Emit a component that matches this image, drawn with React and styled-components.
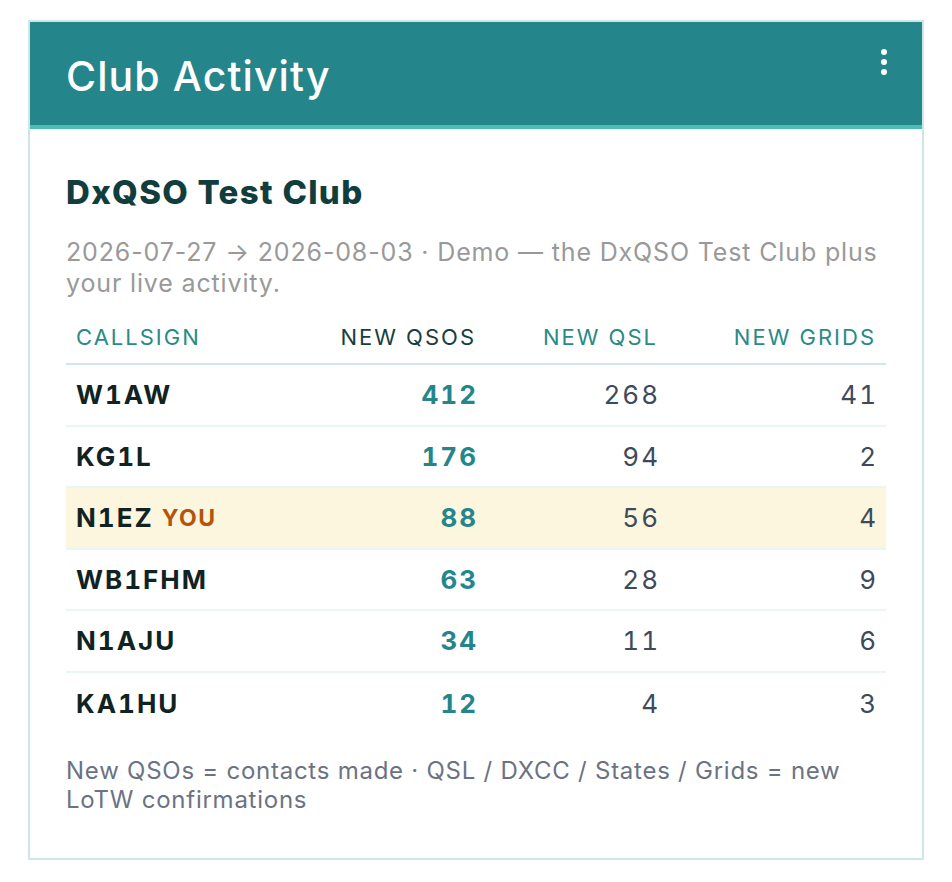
import React from "react";
import styled, { createGlobalStyle } from "styled-components";

const GlobalStyle = createGlobalStyle`
  html, body { margin: 0; padding: 0; background: #ffffff; }
  body { font-family: Inter, "Noto Sans", sans-serif; -webkit-font-smoothing: antialiased; }
`;

const Page = styled.div`
  padding: 20px 28px 24px 28px;
`;

const Card = styled.section`
  border: 2px solid #cfe6e6;
  background: #ffffff;
`;

const Header = styled.header`
  display: flex;
  align-items: flex-start;
  justify-content: space-between;
  background: #24868a;
  border-bottom: 4px solid #4fbcb5;
  padding: 27px 35px 0 36px;
  height: 107px;
  box-sizing: border-box;
`;

const HeaderTitle = styled.h1`
  margin: 0;
  padding-top: 3px;
  font-family: Inter, sans-serif;
  font-weight: 500;
  font-size: 41px;
  line-height: 48px;
  color: #ffffff;
  letter-spacing: 1.1px;
`;

const MenuButton = styled.button`
  display: flex;
  flex-direction: column;
  align-items: center;
  gap: 4px;
  padding: 0;
  background: none;
  border: none;
  cursor: pointer;
`;

const Dot = styled.span`
  width: 6px;
  height: 6px;
  border-radius: 50%;
  background: #ffffff;
`;

const Body = styled.div`
  padding: 44px 36px 44px 36px;
`;

const ClubName = styled.h2`
  margin: 0;
  font-size: 33px;
  line-height: 38px;
  font-weight: 800;
  letter-spacing: 1.3px;
  color: #123d3d;
`;

const Subtitle = styled.p`
  margin: 26px 0 0 0;
  font-size: 25px;
  line-height: 31px;
  letter-spacing: 0.85px;
  color: #999999;
`;

const Grid = styled.div`
  margin-top: 16px;
  display: grid;
  grid-template-columns: 234px 186px 182px 218px;
`;

const HeadCell = styled.div`
  padding: 10px 10px 14px 10px;
  font-size: 22px;
  line-height: 24px;
  letter-spacing: 2px;
  text-transform: uppercase;
  text-align: ${(p) => (p.$right ? "right" : "left")};
  color: ${(p) => (p.$active ? "#173f40" : "#2a8a86")};
  border-bottom: 2px solid #d2e8e8;
  font-weight: 400;
`;

const Cell = styled.div`
  height: 61.5px;
  box-sizing: border-box;
  display: flex;
  align-items: center;
  justify-content: ${(p) => (p.$right ? "flex-end" : "flex-start")};
  gap: 8px;
  padding: 0 ${(p) => (p.$right ? "8px" : "10px")} 0 10px;
  font-size: 26px;
  font-variant-numeric: tabular-nums;
  font-weight: ${(p) => (p.$bold ? 700 : 400)};
  color: ${(p) => p.$color || "#3e4a5c"};
  background: ${(p) => (p.$you ? "#fdf6df" : "transparent")};
  border-bottom: ${(p) => (p.$last ? "none" : "2px solid #e9f6f6")};
  letter-spacing: 2px;
`;

const YouBadge = styled.span`
  font-size: 23px;
  font-weight: 700;
  color: #b5530b;
  letter-spacing: 1.5px;
`;

const Footer = styled.p`
  margin: 22px 0 0 0;
  font-size: 24px;
  line-height: 29px;
  letter-spacing: 0.75px;
  color: #6b7383;
`;

const rows = [
  { call: "W1AW", qsos: 412, qsl: 268, grids: 41 },
  { call: "KG1L", qsos: 176, qsl: 94, grids: 2 },
  { call: "N1EZ", qsos: 88, qsl: 56, grids: 4, you: true },
  { call: "WB1FHM", qsos: 63, qsl: 28, grids: 9 },
  { call: "N1AJU", qsos: 34, qsl: 11, grids: 6 },
  { call: "KA1HU", qsos: 12, qsl: 4, grids: 3 },
];

export default function App() {
  return (
    <>
      <GlobalStyle />
      <Page>
        <Card>
          <Header>
            <HeaderTitle>Club Activity</HeaderTitle>
            <MenuButton aria-label="More options">
              <Dot />
              <Dot />
              <Dot />
            </MenuButton>
          </Header>
          <Body>
            <ClubName>DxQSO Test Club</ClubName>
            <Subtitle>
              2026-07-27 → 2026-08-03 · Demo — the DxQSO Test Club plus your live activity.
            </Subtitle>
            <Grid>
              <HeadCell>Callsign</HeadCell>
              <HeadCell $right $active>New QSOs</HeadCell>
              <HeadCell $right>New QSL</HeadCell>
              <HeadCell $right>New Grids</HeadCell>
              {rows.map((r, i) => {
                const last = i === rows.length - 1;
                return (
                  <React.Fragment key={r.call}>
                    <Cell $bold $color="#102323" $you={r.you} $last={last}>
                      {r.call}
                      {r.you && <YouBadge>YOU</YouBadge>}
                    </Cell>
                    <Cell $right $bold $color="#24868a" $you={r.you} $last={last}>
                      {r.qsos}
                    </Cell>
                    <Cell $right $you={r.you} $last={last}>{r.qsl}</Cell>
                    <Cell $right $you={r.you} $last={last}>{r.grids}</Cell>
                  </React.Fragment>
                );
              })}
            </Grid>
            <Footer>
              New QSOs = contacts made · QSL / DXCC / States / Grids = new LoTW confirmations
            </Footer>
          </Body>
        </Card>
      </Page>
    </>
  );
}
